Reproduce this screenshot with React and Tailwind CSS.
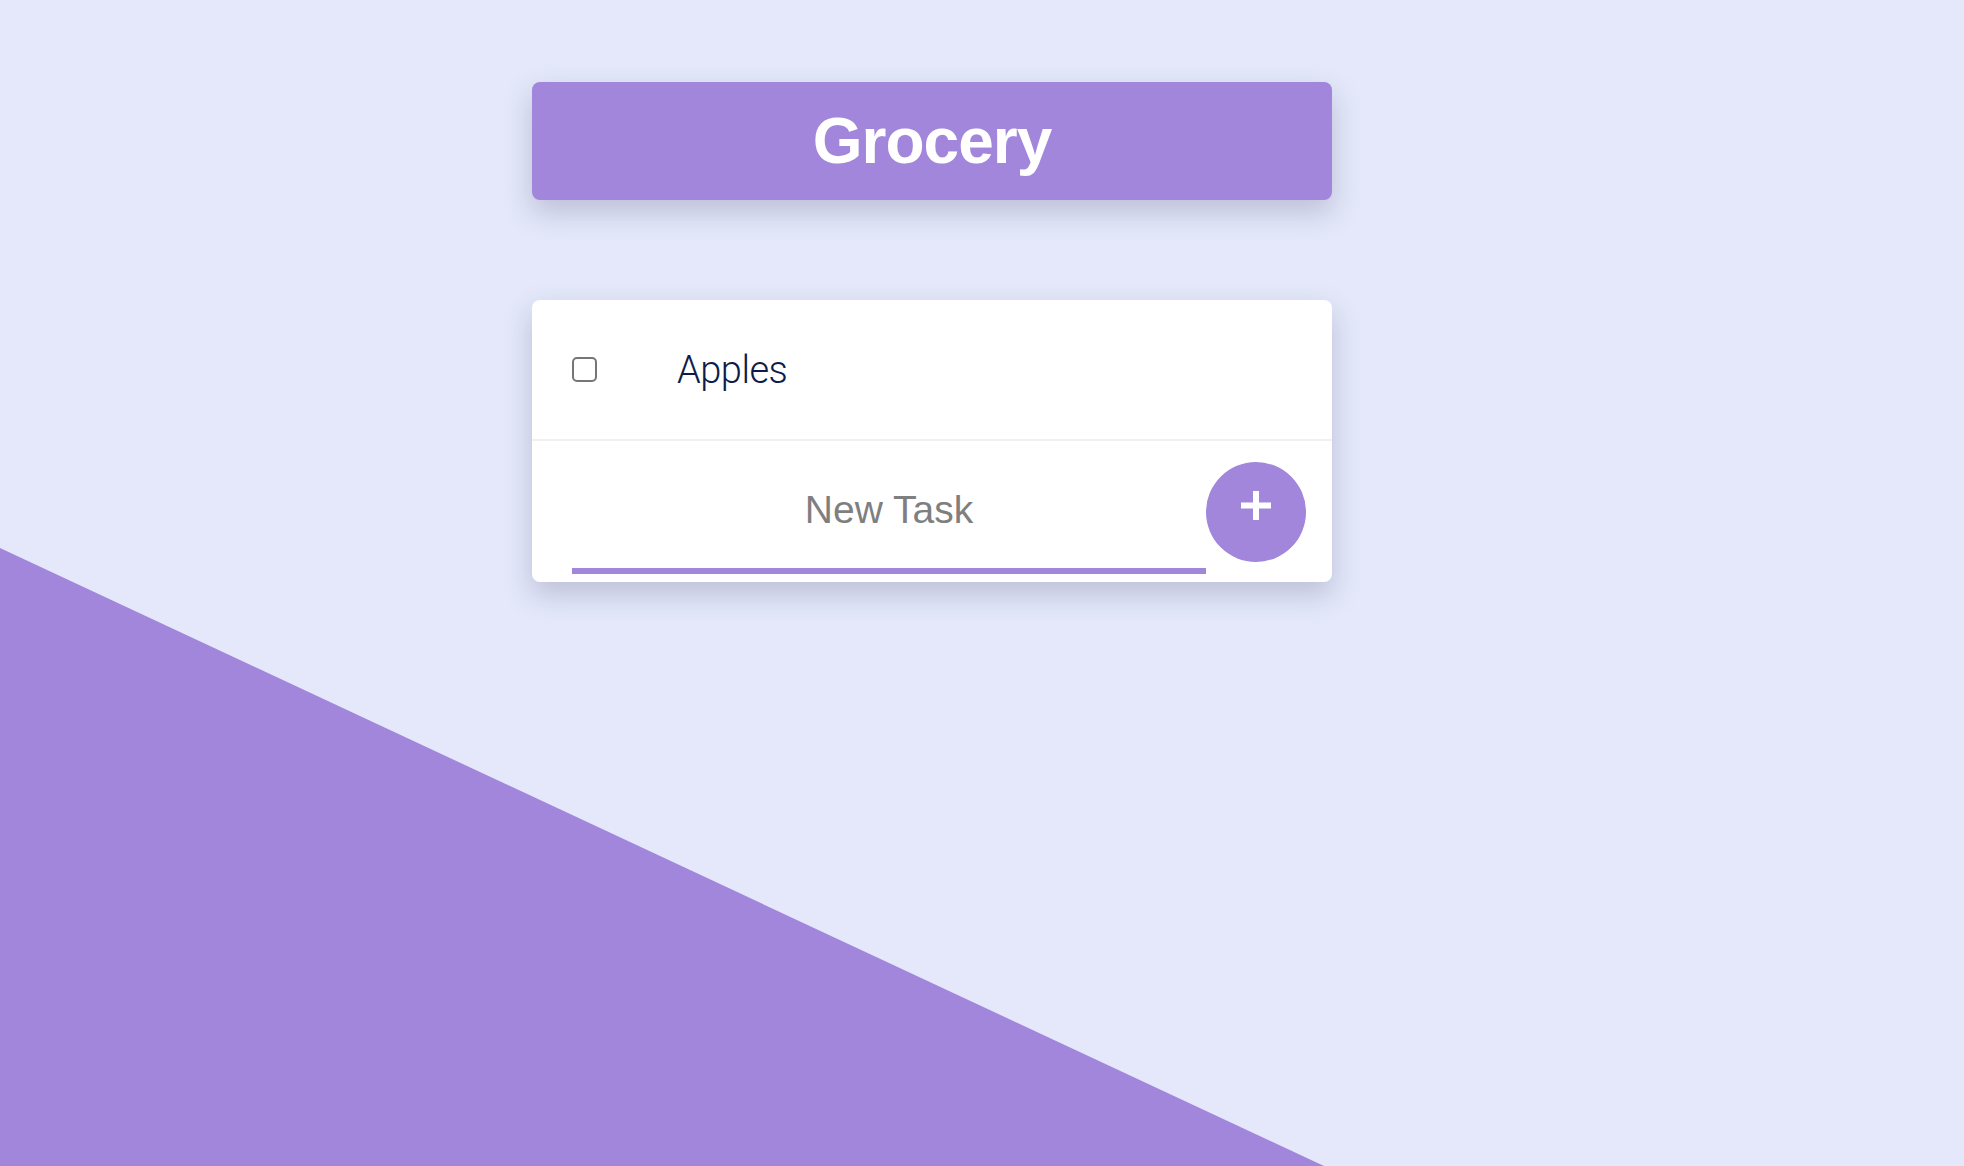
import React, { useState } from 'react';

const App = () => {
  const [task, setTask] = useState('');
  const [items, setItems] = useState([{ id: 1, text: 'Apples', done: false }]);

  const toggle = (id) => {
    setItems(items.map(i => (i.id === id ? { ...i, done: !i.done } : i)));
  };

  const addTask = (e) => {
    e.preventDefault();
    if (!task.trim()) return;
    setItems([...items, { id: Date.now(), text: task, done: false }]);
    setTask('');
  };

  return (
    <div className="relative min-h-screen h-[1166px] overflow-hidden bg-[#e4e8fa] font-['Liberation_Sans',Arial,sans-serif]">
      {/* Background wedge */}
      <div className="absolute inset-0 bg-[#a186dc] [clip-path:polygon(0_548px,1324px_100%,0_100%)]" />

      <div className="relative flex flex-col items-start pl-[532px] pt-[82px]">
        {/* Header */}
        <div className="w-[800px] h-[118px] rounded-lg bg-[#a186dc] shadow-[0_12px_28px_rgba(70,70,110,0.25)] flex items-center justify-center">
          <h1 className="text-[64px] font-bold text-white tracking-[-1px] leading-none">Grocery</h1>
        </div>

        {/* List card */}
        <div className="mt-[100px] w-[800px] rounded-lg bg-white shadow-[0_12px_28px_rgba(70,70,110,0.25)]">
          {items.map(item => (
            <div key={item.id} className="h-[141px] flex items-center border-b-2 border-[#f0f0f0] pl-[40px]">
              <button
                type="button"
                onClick={() => toggle(item.id)}
                className="w-[25px] h-[25px] rounded-[5px] border-2 border-[#767676] bg-white shrink-0"
              />
              <span className="ml-[80px] text-[38px] font-['Roboto',sans-serif] font-light text-[#0d1c4a] tracking-[-0.5px] leading-none">
                {item.text}
              </span>
            </div>
          ))}

          <form onSubmit={addTask} className="h-[141px] flex items-end pl-[40px] pr-[26px] pb-[8px]">
            <input
              type="text"
              value={task}
              onChange={e => setTask(e.target.value)}
              placeholder="New Task"
              className="w-[634px] h-[122px] border-b-[6px] border-[#a186dc] text-center text-[39px] text-[#333] placeholder:text-[#7f7f7f] outline-none bg-transparent"
            />
            <button
              type="submit"
              className="mb-[12px] w-[100px] h-[100px] rounded-full bg-[#a186dc] flex items-center justify-center shrink-0"
            >
              <svg width="30" height="30" viewBox="0 0 30 30" className="-mt-[12px]">
                <rect x="0" y="11.5" width="30" height="6" fill="white" />
                <rect x="12" y="0" width="6" height="29" fill="white" />
              </svg>
            </button>
          </form>
        </div>
      </div>
    </div>
  );
};

export default App;
